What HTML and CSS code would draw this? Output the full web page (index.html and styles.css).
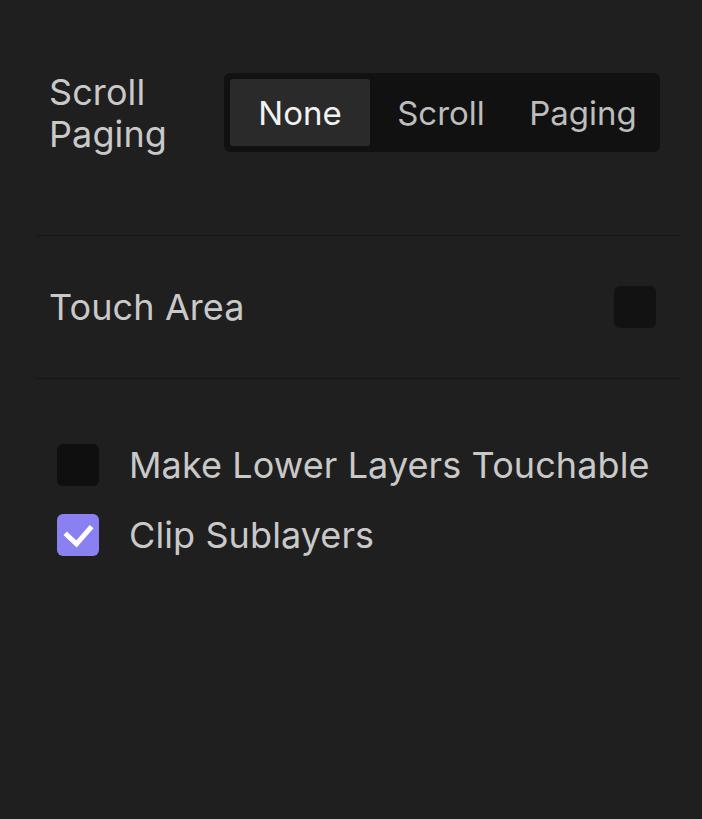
FILE: index.html
```html
<!DOCTYPE html>
<html>

<head>
    <link rel="stylesheet" href="styles.css">
</head>

<body>
    <div class="panel">
        <div class="section first">
            <div class="row seg-row">
                <div class="label">Scroll<br>Paging</div>
                <div class="segment">
                    <div class="seg-item active">None</div>
                    <div class="seg-item">Scroll</div>
                    <div class="seg-item">Paging</div>
                </div>
            </div>
        </div>
        <div class="section second">
            <div class="row">
                <div class="label">Touch Area</div>
                <div class="swatch"></div>
            </div>
        </div>
        <div class="section third">
            <div class="check-row">
                <div class="box"></div>
                <div class="label">Make Lower Layers Touchable</div>
            </div>
            <div class="check-row">
                <div class="box checked">
                    <svg width="42" height="42" viewBox="0 0 42 42">
                        <path d="M10 21 L19.5 30 L33 14.5" fill="none" stroke="#fff" stroke-width="5" stroke-linecap="square" stroke-linejoin="miter" />
                    </svg>
                </div>
                <div class="label">Clip Sublayers</div>
            </div>
        </div>
    </div>
</body>

</html>
```

FILE: styles.css
```css
* {
    padding: 0;
    margin: 0;
    box-sizing: border-box;
}

body {
    height: 100vh;
    background: #1f1f1f;
    font-family: Inter, 'Noto Sans', sans-serif;
    color: #c9c9c9;
}

.panel {
    margin: 0 22px 0 36px;
}

.section {
    border-bottom: 1px solid #171717;
}

.section.first {
    padding: 73px 20px 83px 13px;
}

.section.second {
    padding: 50px 24px 50px 13px;
}

.section.third {
    border-bottom: none;
    padding: 65px 0 0 21px;
    display: flex;
    flex-direction: column;
    gap: 28px;
}

.row {
    display: flex;
    justify-content: space-between;
    align-items: center;
}

.seg-row {
    height: 79px;
}

.label {
    font-size: 36px;
    line-height: 42px;
    letter-spacing: 0.1px;
    white-space: nowrap;
}

.segment {
    width: 436px;
    height: 79px;
    background: #111;
    border-radius: 6px;
    padding: 6px;
    display: flex;
}

.seg-item {
    flex: 1;
    display: flex;
    align-items: center;
    justify-content: center;
    font-size: 33px;
    color: #bdbdbd;
    border-radius: 3px;
}

.seg-item.active {
    flex: 0 0 140px;
    background: #2a2a2a;
    color: #f2f2f2;
}

.swatch {
    width: 42px;
    height: 42px;
    border-radius: 6px;
    background: #121212;
}

.check-row {
    display: flex;
    align-items: center;
    gap: 30px;
}

.box {
    width: 42px;
    height: 42px;
    border-radius: 6px;
    background: #0f0f0f;
    display: flex;
    align-items: center;
    justify-content: center;
}

.box.checked {
    background: #8a80f2;
}
```
